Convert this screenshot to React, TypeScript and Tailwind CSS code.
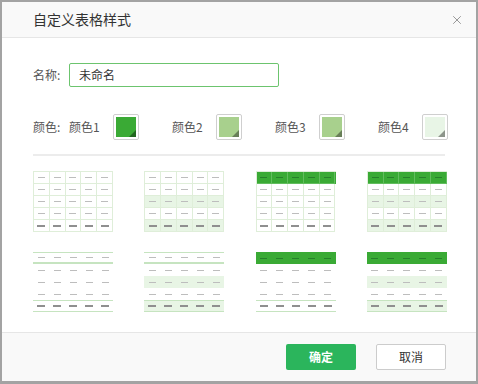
import { X } from "lucide-react";

type TableStyle = {
  grid: boolean;
  header: boolean;
  band: boolean;
};

const styles: TableStyle[] = [
  { grid: true, header: false, band: false },
  { grid: true, header: false, band: true },
  { grid: true, header: true, band: false },
  { grid: true, header: true, band: true },
  { grid: false, header: false, band: false },
  { grid: false, header: false, band: true },
  { grid: false, header: true, band: false },
  { grid: false, header: true, band: true },
];

const swatches = [
  { label: "颜色1", fill: "bg-[#3aaa35]", corner: "#21661f" },
  { label: "颜色2", fill: "bg-[#a8d08d]", corner: "#687f58" },
  { label: "颜色3", fill: "bg-[#a8d08d]", corner: "#687f58" },
  { label: "颜色4", fill: "bg-[#e8f5e6]", corner: "#8d958b" },
];

function Dash({ row, header }: { row: number; header: boolean }) {
  if (row === 0 && header) return <span className="block h-px w-[7px] bg-[#26802a]" />;
  if (row === 4) return <span className="block h-[2px] w-[8px] bg-[#8f8f8f]" />;
  return <span className="block h-px w-[7px] bg-[#bdbdbd]" />;
}

function Preview({ s }: { s: TableStyle }) {
  const rows = [0, 1, 2, 3, 4];
  const cols = [0, 1, 2, 3, 4];

  if (s.grid) {
    return (
      <div className="flex w-[80px] flex-col border-l border-t border-[#dfeed9]">
        {rows.map((r) => {
          const bg = r === 0 && s.header ? "bg-[#3aaa35]" : s.band && (r === 2 || r === 4) ? "bg-[#e8f5e5]" : "bg-white";
          const line = r === 0 && s.header ? "border-[#62bd5e]" : "border-[#dfeed9]";
          return (
            <div key={r} className={`flex h-[12px] ${bg}`}>
              {cols.map((c) => (
                <div key={c} className={`flex h-[12px] w-[16px] items-center justify-center border-b border-r ${line}`}>
                  <Dash row={r} header={s.header} />
                </div>
              ))}
            </div>
          );
        })}
      </div>
    );
  }

  return (
    <div className="flex w-[80px] flex-col">
      {rows.map((r) => {
        const bg = r === 0 && s.header ? "bg-[#3aaa35]" : s.band && (r === 2 || r === 4) ? "bg-[#e8f5e5]" : "bg-white";
        let border = "";
        if (r === 0 && !s.header) border = "border-t border-b-2 border-[#c6e4c0]";
        if (r === 4) border = "border-t border-b border-[#c6e4c0]";
        return (
          <div key={r} className={`flex h-[12px] items-center ${bg} ${border}`}>
            {cols.map((c) => (
              <div key={c} className="flex w-[16px] justify-center">
                <Dash row={r} header={s.header} />
              </div>
            ))}
          </div>
        );
      })}
    </div>
  );
}

export default function App() {
  return (
    <div className="h-[384px] w-[478px] bg-[#a3a3a3] pl-[2px] pt-[2px] font-['Noto_Sans_CJK_SC',sans-serif]">
      <div className="flex h-[379px] w-[474px] flex-col bg-white">
        <div className="flex h-[36px] shrink-0 items-center border-b border-[#e6e6e6] bg-[#f9f9f9]">
          <span className="ml-[31px] flex-1 text-[14px] text-[#333]">自定义表格样式</span>
          <X className="mr-[12px] size-[14px] text-[#8a8a8a]" strokeWidth={1.5} />
        </div>

        <div className="flex flex-1 flex-col px-[31px] pt-[25px]">
          <div className="flex items-center">
            <span className="w-[36px] text-[12px] text-[#555]">名称:</span>
            <div className="flex h-[24px] w-[210px] items-center rounded-[2px] border border-[#6cc46e] px-[9px] text-[12px] text-[#333]">
              未命名
            </div>
          </div>

          <div className="mt-[27px] flex items-center">
            <span className="w-[36px] shrink-0 text-[12px] text-[#555]">颜色:</span>
            {swatches.map((sw) => (
              <div key={sw.label} className="flex w-[103px] shrink-0 items-center">
                <span className="w-[44px] text-[12px] text-[#555]">{sw.label}</span>
                <div className="rounded-[2px] border border-[#cfcfcf] p-[2px]">
                  <div className={`relative size-[20px] ${sw.fill}`}>
                    <svg className="absolute bottom-0 right-0" width="7" height="7" viewBox="0 0 7 7">
                      <polygon points="7,0 7,7 0,7" fill={sw.corner} />
                    </svg>
                  </div>
                </div>
              </div>
            ))}
          </div>

          <div className="mt-[14px] h-[2px] w-[412px] bg-[#ececec]" />

          <div className="mt-[15px] grid w-[414px] grid-cols-4 gap-x-[31px] gap-y-[20px]">
            {styles.map((s, i) => (
              <Preview key={i} s={s} />
            ))}
          </div>
        </div>

        <div className="flex h-[49px] shrink-0 items-center justify-end gap-[20px] border-t border-[#e6e6e6] bg-[#f9f9f9] pr-[30px]">
          <button className="h-[26px] w-[70px] rounded-[2px] bg-[#2bb55c] text-[12px] font-bold text-white">确定</button>
          <button className="h-[26px] w-[70px] rounded-[2px] border border-[#cccccc] bg-white text-[12px] text-[#333]">取消</button>
        </div>
      </div>
    </div>
  );
}
